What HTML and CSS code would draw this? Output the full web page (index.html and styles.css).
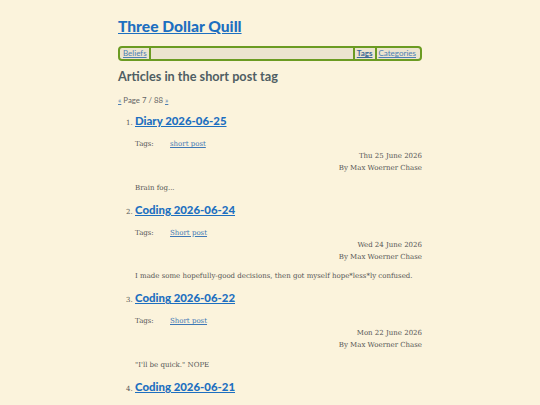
FILE: index.html
```html
<!DOCTYPE html>
<html>
<head>
<meta charset="utf-8">
<link rel="stylesheet" href="styles.css">
</head>
<body>
<div class="page">
  <h1 class="site-title"><a href="#">Three Dollar Quill</a></h1>
  <nav class="nav">
    <a class="nav-item nav-left" href="#">Beliefs</a>
    <span class="nav-fill"></span>
    <a class="nav-item nav-current" href="#">Tags</a>
    <a class="nav-item" href="#">Categories</a>
  </nav>
  <h2 class="tag-heading">Articles in the short post tag</h2>
  <p class="pager"><a href="#">«</a> Page 7 / 88 <a href="#">»</a></p>
  <ol class="articles" start="1">
    <li class="article">
      <h3 class="article-title"><a href="#">Diary 2026-06-25</a></h3>
      <div class="tags"><span class="tags-label">Tags:</span><a href="#">short post</a></div>
      <div class="meta"><div>Thu 25 June 2026</div><div>By Max Woerner Chase</div></div>
      <p class="summary">Brain fog...</p>
    </li>
    <li class="article">
      <h3 class="article-title"><a href="#">Coding 2026-06-24</a></h3>
      <div class="tags"><span class="tags-label">Tags:</span><a href="#">Short post</a></div>
      <div class="meta"><div>Wed 24 June 2026</div><div>By Max Woerner Chase</div></div>
      <p class="summary">I made some hopefully-good decisions, then got myself hope*less*ly confused.</p>
    </li>
    <li class="article">
      <h3 class="article-title"><a href="#">Coding 2026-06-22</a></h3>
      <div class="tags"><span class="tags-label">Tags:</span><a href="#">Short post</a></div>
      <div class="meta"><div>Mon 22 June 2026</div><div>By Max Woerner Chase</div></div>
      <p class="summary">"I'll be quick." NOPE</p>
    </li>
    <li class="article">
      <h3 class="article-title"><a href="#">Coding 2026-06-21</a></h3>
      <div class="tags"><span class="tags-label">Tags:</span><a href="#">Short post</a></div>
      <div class="meta"><div>Sun 21 June 2026</div><div>By Max Woerner Chase</div></div>
      <p class="summary">More work.</p>
    </li>
  </ol>
</div>
</body>
</html>
```
FILE: styles.css
```css
html, body {
  margin: 0;
  padding: 0;
  background: #fbf3dc;
}
body {
  font-family: "DejaVu Serif", serif;
  color: #555555;
  font-size: 7px;
}
.page {
  width: 304px;
  margin: 0 auto;
  padding-top: 14px;
}
a {
  color: #1d6fc0;
}
.site-title {
  font-family: "Lato", "Open Sans", sans-serif;
  font-size: 15.6px;
  font-weight: 900;
  margin: 0 0 8px 0;
  line-height: 24px;
}
.site-title a {
  color: #1d6fc0;
}
.nav {
  display: flex;
  align-items: stretch;
  border: 2px solid #6b9b22;
  border-radius: 4px;
  background: #ece4cf;
  height: 11px;
  font-family: "Lato", sans-serif;
  font-size: 8px;
  line-height: 11px;
  padding: 0 2px 0 1px;
}
.nav-item {
  color: #4d7fb3;
  padding: 0 2px;
}
.nav-left {
  border-right: 2px solid #6b9b22;
}
.nav-fill {
  flex: 1;
}
.nav-current {
  border-left: 2px solid #6b9b22;
  border-right: 2px solid #6b9b22;
  font-weight: 700;
  color: #3a6896;
}
.tag-heading {
  font-family: "Lato", "Open Sans", sans-serif;
  font-size: 12.7px;
  font-weight: 700;
  color: #4f5e63;
  margin: 6px 0 0 0;
  line-height: 18px;
}
.pager {
  font-family: "Lato", sans-serif;
  font-size: 7.8px;
  color: #666;
  margin: 10px 0 0 0;
  line-height: 10px;
}
.pager a {
  color: #4d7fb3;
}
.articles {
  margin: 0;
  padding: 0 0 0 17px;
}
.article::marker {
  font-size: 7px;
  color: #555;
}
.article-title {
  font-family: "Lato", "Open Sans", sans-serif;
  font-size: 11.4px;
  font-weight: 900;
  margin: 7px 0 0 0;
  line-height: 18px;
}
.article-title a {
  color: #1d6fc0;
}
.tags {
  margin-top: 8px;
  line-height: 12px;
  display: flex;
}
.tags-label {
  width: 35px;
}
.tags a {
  color: #3f78b5;
}
.meta {
  text-align: right;
  line-height: 12px;
}
.summary {
  margin: 7.7px 0 0 0;
  line-height: 12px;
}
```
